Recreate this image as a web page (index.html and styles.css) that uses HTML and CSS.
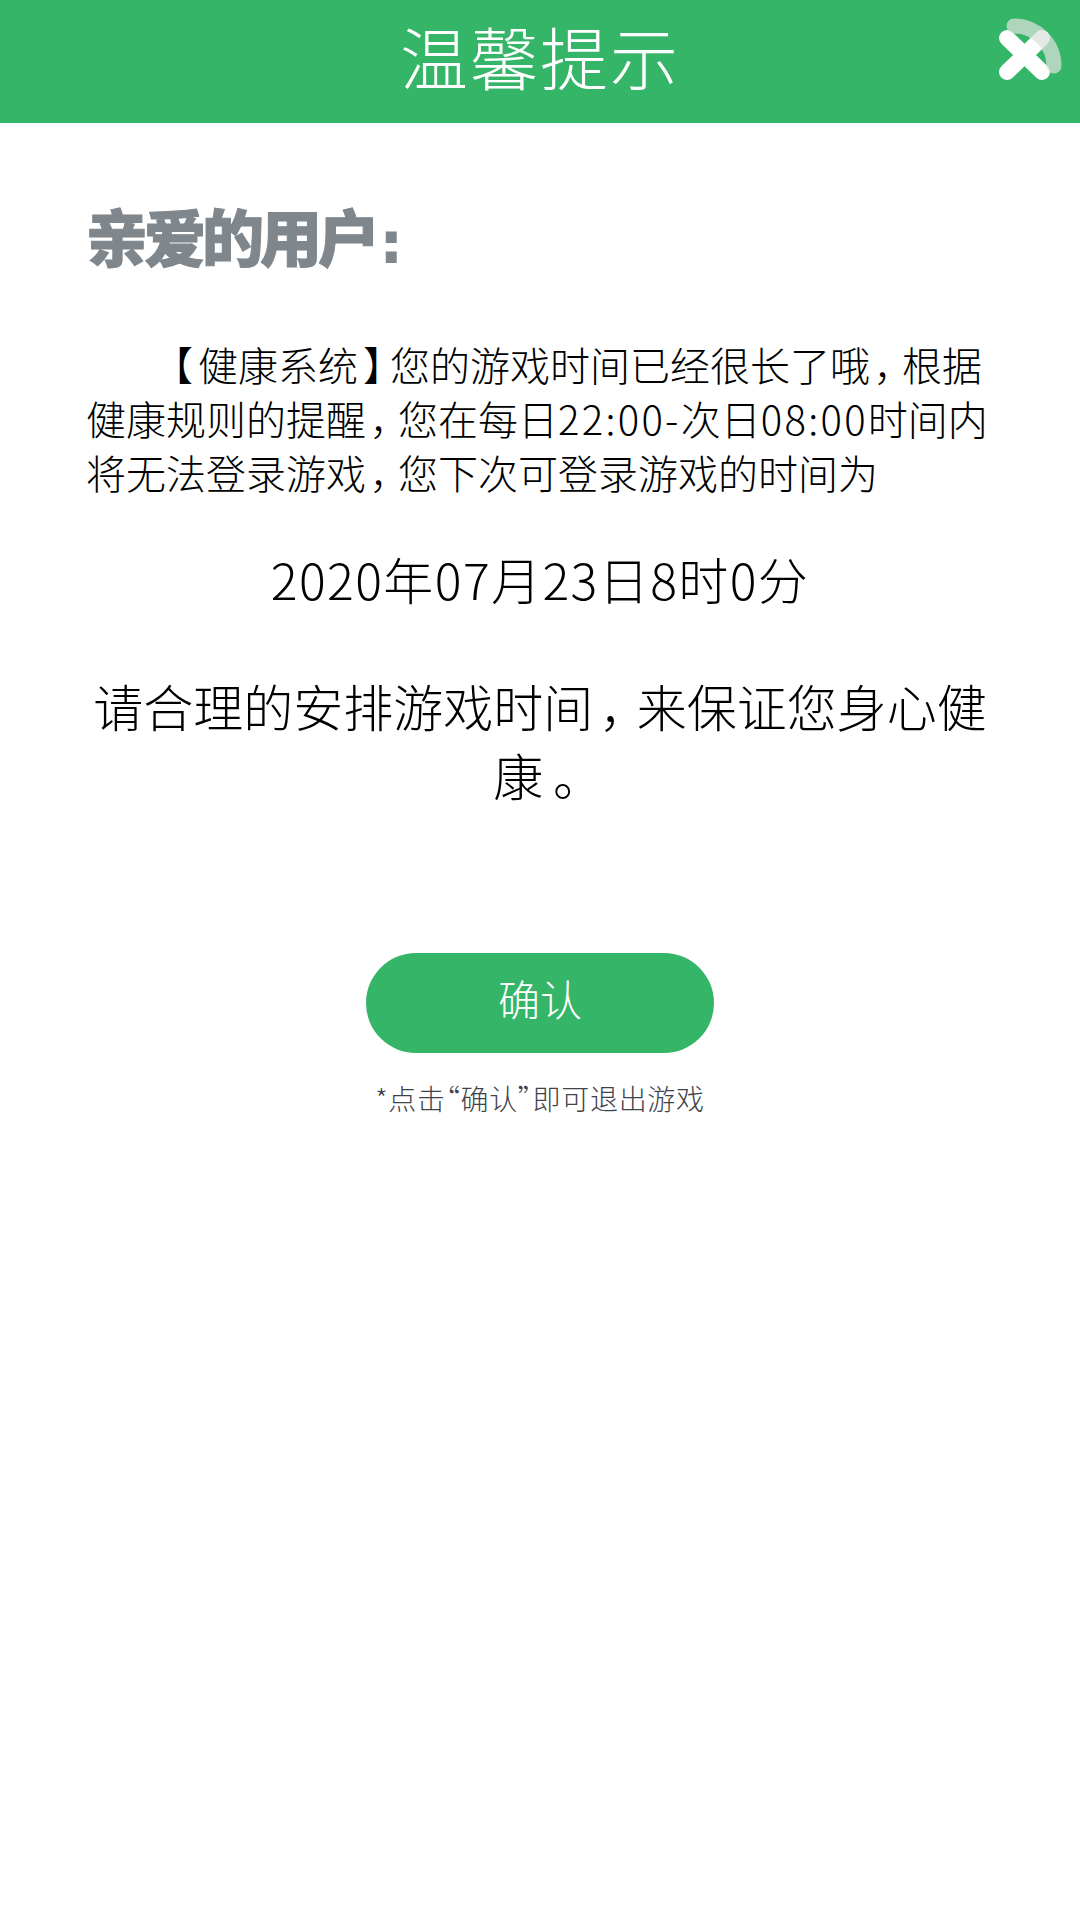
FILE: index.html
```html
<!DOCTYPE html>
<html lang="zh-CN">
<head>
    <meta charset="UTF-8">
    <meta name="viewport" content="width=device-width, initial-scale=1.0">
    <title>温馨提示</title>
    <link rel="stylesheet" href="styles.css">
</head>
<body>
    <header class="topbar">
        <h1 class="title">温馨提示</h1>
        <svg class="close" viewBox="0 0 70 70" width="70" height="70">
            <path d="M9 23 L44 57 M44 23 L9 57" fill="none" stroke="#fff" stroke-width="16" stroke-linecap="round"/>
            <path d="M16 11 A 40 40 0 0 1 56 51" fill="none" stroke="rgba(218,225,220,0.74)" stroke-width="15" stroke-linecap="round"/>
        </svg>
    </header>

    <main class="content">
        <h2 class="greeting">亲爱的用户<span class="greeting-colon">:</span></h2>
        <p class="message"><span class="punct">【</span>健康系统<span class="punct">】</span>您的游戏时间已经很长了哦<span class="punct">，</span>根据健康规则的提醒<span class="punct">，</span>您在每日<span class="time">22:00-</span>次日<span class="time">08:00</span>时间内将无法登录游戏<span class="punct">，</span>您下次可登录游戏的时间为</p>
        <p class="unlock-time">2020年07月23日8时0分</p>
        <p class="advice">请合理的安排游戏时间<span class="punct">，</span>来保证您身心健康<span class="punct">。</span></p>
        <a class="confirm" href="#">确认</a>
        <p class="note">*点击“确认”即可退出游戏</p>
    </main>
</body>
</html>
```

FILE: styles.css
```css
* {
    margin: 0;
    padding: 0;
    box-sizing: border-box;
}

body {
    font-family: "Noto Sans CJK SC", "Noto Sans", sans-serif;
    font-weight: 300;
    background: #fff;
    color: #000;
    width: 1080px;
    min-height: 1920px;
}

.topbar {
    position: relative;
    height: 123px;
    padding-bottom: 12px;
    background: #35b567;
    display: flex;
    align-items: center;
    justify-content: center;
}

.title {
    font-size: 68px;
    font-weight: 300;
    color: #fff;
    letter-spacing: 2px;
}

.close {
    position: absolute;
    top: 15px;
    right: 12px;
}

.content {
    padding: 72px 86px 0;
    display: flex;
    flex-direction: column;
    align-items: center;
}

.greeting {
    align-self: flex-start;
    font-size: 62px;
    line-height: 80px;
    font-weight: 900;
    letter-spacing: -4px;
    color: #7f868c;
    -webkit-text-stroke: 1px #7f868c;
}

.greeting-colon {
    margin-left: 4px;
    font-family: "DejaVu Sans", sans-serif;
    font-size: 56px;
    font-weight: 700;
}

.message {
    margin-top: 54px;
    font-size: 40px;
    line-height: 54px;
    text-indent: 80px;
    width: 100%;
}

.punct {
    display: inline-block;
    width: 0.8em;
    text-indent: 0;
    text-align: center;
    font-feature-settings: "palt";
}

.advice .punct {
    width: 0.87em;
}

.time {
    letter-spacing: 2.3px;
}

.unlock-time {
    margin-top: 44px;
    font-size: 50px;
    line-height: 70px;
    letter-spacing: 1.4px;
    text-align: center;
}

.advice {
    margin-top: 58px;
    font-size: 50px;
    line-height: 69px;
    text-align: center;
}

.confirm {
    margin-top: 144px;
    width: 348px;
    height: 100px;
    border-radius: 50px;
    background: #35b567;
    color: #fff;
    font-size: 42px;
    line-height: 90px;
    text-align: center;
    text-decoration: none;
}

.note {
    margin-top: 25px;
    font-size: 28px;
    line-height: 40px;
    letter-spacing: 0.7px;
    color: #3f444c;
    font-feature-settings: "palt";
}
```
